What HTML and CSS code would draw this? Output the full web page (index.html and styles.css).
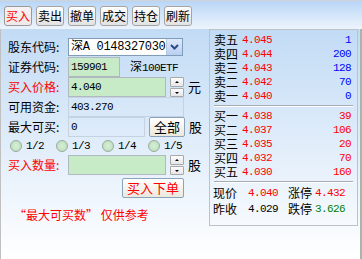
FILE: index.html
```html
<!DOCTYPE html>
<html lang="zh">
<head>
  <meta charset="UTF-8" />
  <title>买入</title>
  <link rel="stylesheet" href="styles.css">
</head>
<body>
  <div class="app">
    <div class="toolbar">
      <button class="tab active">买入</button>
      <button class="tab">卖出</button>
      <button class="tab">撤单</button>
      <button class="tab">成交</button>
      <button class="tab">持仓</button>
      <button class="tab">刷新</button>
    </div>

    <div class="main">
      <div class="form">
        <div class="row">
          <span class="label">股东代码:</span>
          <div class="select">
            <span class="select-text">深A 0148327030</span>
            <span class="drop">
              <svg width="9" height="6" viewBox="0 0 9 6"><path d="M1 1 L4.5 4.5 L8 1" fill="none" stroke="#2b4a8c" stroke-width="2"/></svg>
            </span>
          </div>
        </div>

        <div class="row">
          <span class="label">证券代码:</span>
          <div class="field green w52 num">159901</div>
          <span class="stock-name">深<span class="num">100ETF</span></span>
        </div>

        <div class="row">
          <span class="label red">买入价格:</span>
          <div class="field green w98 num">4.040</div>
          <div class="spin"><span class="up"></span><span class="down"></span></div>
          <span class="unit">元</span>
        </div>

        <div class="row">
          <span class="label">可用资金:</span>
          <div class="field plain w116 num">403.270</div>
        </div>

        <div class="row">
          <span class="label">最大可买:</span>
          <div class="field plain w77 num">0</div>
          <button class="btn all">全部</button>
          <span class="unit">股</span>
        </div>

        <div class="radios">
          <label class="radio-item"><span class="radio"></span><span class="num">1/2</span></label>
          <label class="radio-item"><span class="radio"></span><span class="num">1/3</span></label>
          <label class="radio-item"><span class="radio"></span><span class="num">1/4</span></label>
          <label class="radio-item"><span class="radio"></span><span class="num">1/5</span></label>
        </div>

        <div class="row">
          <span class="label red">买入数量:</span>
          <div class="field green w98"></div>
          <div class="spin"><span class="up"></span><span class="down"></span></div>
          <span class="unit">股</span>
        </div>

        <div class="submit-row">
          <button class="btn submit">买入下单</button>
        </div>

        <p class="note">“最大可买数” 仅供参考</p>
      </div>

      <div class="quote">
        <div class="level"><span>卖五</span><span class="num red">4.045</span><span class="num qty blue">1</span></div>
        <div class="level"><span>卖四</span><span class="num red">4.044</span><span class="num qty blue">200</span></div>
        <div class="level"><span>卖三</span><span class="num red">4.043</span><span class="num qty blue">128</span></div>
        <div class="level"><span>卖二</span><span class="num red">4.042</span><span class="num qty blue">70</span></div>
        <div class="level"><span>卖一</span><span class="num red">4.040</span><span class="num qty blue">0</span></div>
        <div class="sep"></div>
        <div class="level"><span>买一</span><span class="num red">4.038</span><span class="num qty red">39</span></div>
        <div class="level"><span>买二</span><span class="num red">4.037</span><span class="num qty red">106</span></div>
        <div class="level"><span>买三</span><span class="num red">4.035</span><span class="num qty red">20</span></div>
        <div class="level"><span>买四</span><span class="num red">4.032</span><span class="num qty red">70</span></div>
        <div class="level"><span>买五</span><span class="num red">4.030</span><span class="num qty red">160</span></div>
        <div class="sep"></div>
        <div class="summary">
          <span>现价</span><span class="num red">4.040</span><span>涨停</span><span class="num red">4.432</span>
          <span>昨收</span><span class="num">4.029</span><span>跌停</span><span class="num green">3.626</span>
        </div>
      </div>
    </div>
  </div>
</body>
</html>
```

FILE: styles.css
```css
body {
  margin: 0;
  font-family: "Noto Sans CJK SC", "Liberation Sans", sans-serif;
  font-size: 12px;
  line-height: 14px;
  color: #000;
}

.app {
  width: 362px;
  height: 259px;
  display: flex;
  flex-direction: column;
  overflow: hidden;
}

/* barra de pestañas */
.toolbar {
  height: 29px;
  box-sizing: border-box;
  border-top: 1px solid #d0d4d8;
  padding: 5px 0 0 4px;
  display: flex;
  gap: 4px;
  background: linear-gradient(#b9d6f6, #edf4fc);
}

.tab {
  width: 28px;
  height: 20px;
  padding: 0;
  font-family: inherit;
  font-size: 12px;
  line-height: 18px;
  border: 1px solid #a4a4a4;
  border-radius: 3px;
  background: linear-gradient(#ffffff, #e2e2e2);
  color: #000;
}

.tab.active {
  color: #f00;
  background: linear-gradient(#f6f2f2, #efe9e9);
  border-color: #9a9a9a;
}

.main {
  flex: 1;
  display: flex;
  align-items: flex-start;
  border-left: 1px solid #c0c0c0;
  border-right: 2px solid #a9b5aa;
  background: linear-gradient(#c2dbf5, #ffffff);
}

.form {
  width: 208px;
  box-sizing: border-box;
  padding: 8px 0 0 7px;
}

.row {
  display: flex;
  align-items: center;
  height: 20px;
}

.label {
  width: 60px;
  flex-shrink: 0;
}

.red { color: #f00; }
.blue { color: #00f; }
.green { color: #008000; }

.num {
  font-family: "Liberation Mono", monospace;
  font-size: 11px;
  letter-spacing: -0.6px;
}

.select {
  display: flex;
  width: 115px;
  height: 18px;
  box-sizing: border-box;
  border: 1px solid #7f9db9;
  background: #fff;
}

.select-text {
  flex: 1;
  padding-left: 2px;
  white-space: nowrap;
  overflow: hidden;
  font-family: "Liberation Mono", "Noto Sans CJK SC", monospace;
  font-size: 12px;
  letter-spacing: -0.3px;
  line-height: 16px;
}

.drop {
  width: 15px;
  flex-shrink: 0;
  display: flex;
  align-items: center;
  justify-content: center;
  border-left: 1px solid #b6c8e2;
  background: linear-gradient(#dfeafb, #b9cff0);
}

.field {
  height: 20px;
  box-sizing: border-box;
  padding-left: 2px;
  line-height: 18px;
  border: 1px solid #b0b8c0;
}

.field.green { background: #c7eac7; color: #000; }
.field.plain { background: transparent; border-color: #c4d2e2; }

.w52 { width: 52px; }
.w77 { width: 77px; }
.w98 { width: 98px; }
.w116 { width: 116px; }

.stock-name {
  margin-left: 10px;
  white-space: nowrap;
}

.spin {
  width: 14px;
  height: 20px;
  margin-left: 4px;
  display: flex;
  flex-direction: column;
  gap: 1px;
}

.spin span {
  flex: 1;
  border: 1px solid #a8a8a8;
  border-radius: 1px;
  background: linear-gradient(#fdfdfd, #e6e6e6);
  position: relative;
}

.spin span::after {
  content: "";
  position: absolute;
  left: 4px;
  top: 3px;
  border-left: 2px solid transparent;
  border-right: 2px solid transparent;
}

.spin .up::after { border-bottom: 2px solid #000; }
.spin .down::after { border-top: 2px solid #000; }

.unit {
  margin-left: 4px;
  font-size: 13px;
}

.btn {
  padding: 0;
  font-family: inherit;
  font-size: 13px;
  line-height: 18px;
  border: 1px solid #8aa3bd;
  border-radius: 2px;
  background: linear-gradient(#ffffff, #ebe8dc);
  color: #000;
}

.btn.all {
  width: 36px;
  height: 20px;
  margin-left: 4px;
}

.radios {
  display: flex;
  height: 18px;
  align-items: center;
  padding-left: 2px;
}

.radio-item {
  width: 46px;
  display: flex;
  align-items: center;
  gap: 4px;
}

.radio {
  width: 12px;
  height: 12px;
  box-sizing: border-box;
  border-radius: 50%;
  border: 1px solid #9aa8a0;
  background: radial-gradient(#d6f0d6, #b8dcb8);
}

.submit-row {
  padding-left: 114px;
  margin-top: 3px;
}

.btn.submit {
  width: 62px;
  height: 20px;
  color: #f00;
}

.note {
  margin: 10px 0 0 6px;
  color: #f00;
  font-size: 12px;
  white-space: nowrap;
}

/* cuadro de cotizaciones */
.quote {
  width: 149px;
  height: 197px;
  box-sizing: border-box;
  border: 1px solid #bcc2c8;
  padding: 3px 6px 0 4px;
}

.level {
  display: flex;
  align-items: center;
  height: 14px;
}

.level span:first-child {
  width: 28px;
}

.qty {
  margin-left: auto;
}

.sep {
  margin: 2px -2px 2px 0;
  border-top: 1px solid #a8acb0;
  border-bottom: 1px solid #ffffff;
}

.summary {
  display: grid;
  grid-template-columns: 35px 40px 27px auto;
  grid-auto-rows: 16px;
  align-items: center;
  margin-left: -1px;
  margin-top: 1px;
}
```
